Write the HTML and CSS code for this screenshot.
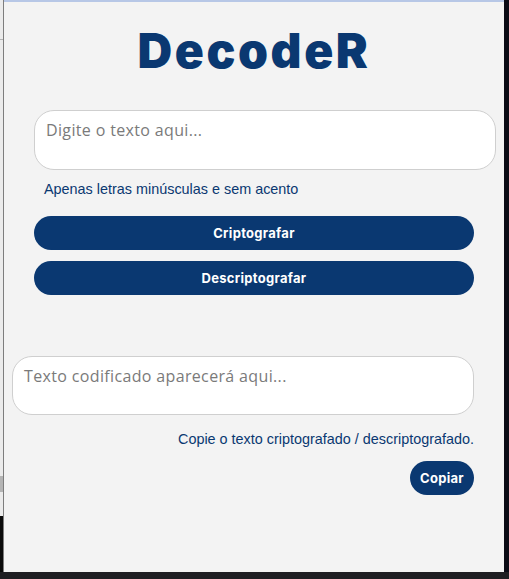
FILE: index.html
```html
<!DOCTYPE html>
<html lang="pt-BR">
<head>
<meta charset="utf-8">
<title>DecodeR</title>
<link rel="stylesheet" href="styles.css">
</head>
<body>
<div class="screen">
  <div class="row">
    <div class="edge-left"></div>
    <main class="app">
      <h1 class="title">DecodeR</h1>
      <textarea class="field field-input" placeholder="Digite o texto aqui..."></textarea>
      <p class="hint">Apenas letras minúsculas e sem acento</p>
      <button class="btn btn-wide btn-first">Criptografar</button>
      <button class="btn btn-wide btn-second">Descriptografar</button>
      <textarea class="field field-output" placeholder="Texto codificado aparecerá aqui..."></textarea>
      <p class="note">Copie o texto criptografado / descriptografado.</p>
      <div class="actions">
        <button class="btn btn-copy">Copiar</button>
      </div>
    </main>
    <div class="edge-right"></div>
  </div>
  <div class="edge-bottom"></div>
</div>
</body>
</html>
```
FILE: styles.css
```css
* { box-sizing: border-box; }
html, body { margin: 0; padding: 0; }
body { background: #121214; font-family: "Liberation Sans", Arial, sans-serif; }

.screen { display: flex; flex-direction: column; width: 509px; height: 579px; }
.row { display: flex; height: 572px; }
.edge-left {
  width: 4px;
  background: linear-gradient(to bottom, #ebebeb 0 39px, #b4b4b4 39px 40px, #ebebeb 40px 476px, #b4b4b4 476px 492px, #ebebeb 492px 516px, #0a0a0a 516px);
  border-right: 1px solid #7d7d7d;
}
.app {
  flex: 1;
  background: #f3f3f3;
  border-top: 2px solid #b7c7e6;
  display: flex;
  flex-direction: column;
  padding: 0 30px;
}
.edge-right { width: 5px; background: #0b0b15; }
.edge-bottom { height: 7px; background: #1e1e22; }

.title {
  margin: 21px 0 0;
  text-align: center;
  font-family: Inter, "Open Sans", sans-serif;
  font-weight: 900;
  font-size: 48px;
  line-height: 56px;
  letter-spacing: 2.6px;
  color: #0a3871;
}

.field {
  display: block;
  background: #fff;
  border: 1px solid #cfcfcf;
  border-radius: 20px;
  padding: 8px 11px;
  resize: none;
  overflow: hidden;
  font-family: "Open Sans", sans-serif;
  font-size: 16px;
  line-height: 22px;
  letter-spacing: 0.35px;
  color: #333;
  outline: none;
}
.field::placeholder { color: #7a7a7a; }
.field-input { margin: 31px -22px 0 0; height: 60px; }
.field-output { margin: 61px 0 0 -22px; height: 59px; }

.hint {
  margin: 11px 0 0;
  padding-left: 10px;
  font-size: 14.4px;
  line-height: 16px;
  color: #0a3871;
}
.note {
  margin: 16px 0 0;
  text-align: right;
  font-size: 14.4px;
  line-height: 16px;
  color: #0a3871;
}

.btn {
  display: block;
  height: 34px;
  border: none;
  border-radius: 17px;
  background: #0a3871;
  color: #fff;
  font-family: Inter, "Open Sans", sans-serif;
  font-weight: 700;
  font-size: 13px;
  letter-spacing: 0.3px;
  cursor: pointer;
}
.btn-wide { width: 100%; }
.btn-first { margin-top: 19px; }
.btn-second { margin-top: 11px; }

.actions { display: flex; justify-content: flex-end; margin-top: 14px; }
.btn-copy { width: 64px; padding: 0; }
```
